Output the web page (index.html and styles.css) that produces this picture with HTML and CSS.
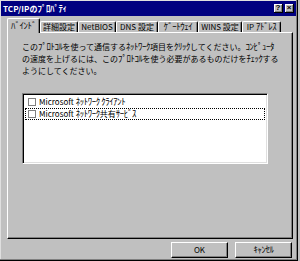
FILE: index.html
```html
<!DOCTYPE html>
<html lang="ja">
<head>
<meta charset="utf-8">
<title>TCP/IPのﾌﾟﾛﾊﾟﾃｨ</title>
<link rel="stylesheet" href="styles.css">
</head>
<body>
<div class="window">
  <div class="titlebar">
    <span class="title">TCP/IPの<span class="k">ﾌﾟﾛﾊﾟﾃｨ</span></span>
    <div class="tbtns">
      <span class="tbtn">?</span>
      <span class="tbtn close">×</span>
    </div>
  </div>
  <div class="client">
    <div class="tabs">
      <span class="tab active"><span class="k">ﾊﾞｲﾝﾄﾞ</span></span>
      <span class="tab">詳細設定</span>
      <span class="tab">NetBIOS</span>
      <span class="tab">DNS 設定</span>
      <span class="tab"><span class="k">ｹﾞｰﾄｳｪｲ</span></span>
      <span class="tab">WINS 設定</span>
      <span class="tab">IP <span class="k">ｱﾄﾞﾚｽ</span></span>
    </div>
    <div class="panel">
      <div class="desc">
        <span class="line">この<span class="k">ﾌﾟﾛﾄｺﾙ</span>を使って通信する<span class="k">ﾈｯﾄﾜｰｸ</span>項目を<span class="k">ｸﾘｯｸ</span>してください。<span class="k">ｺﾝﾋﾟｭｰﾀ</span></span>
        <span class="line">の速度を上げるには、この<span class="k">ﾌﾟﾛﾄｺﾙ</span>を使う必要があるものだけを<span class="k">ﾁｪｯｸ</span>する</span>
        <span class="line">ようにしてください。</span>
      </div>
      <div class="list">
        <div class="item"><span class="check"></span><span>Microsoft <span class="k">ﾈｯﾄﾜｰｸ ｸﾗｲｱﾝﾄ</span></span></div>
        <div class="item focus"><span class="check"></span><span>Microsoft <span class="k">ﾈｯﾄﾜｰｸ</span>共有<span class="k">ｻｰﾋﾞｽ</span></span></div>
      </div>
    </div>
    <div class="buttons">
      <span class="btn">OK</span>
      <span class="btn"><span class="k">ｷｬﾝｾﾙ</span></span>
    </div>
  </div>
</div>
</body>
</html>
```

FILE: styles.css
```css
html, body {
  margin: 0;
  padding: 0;
  background: #c0c0c0;
}

body {
  font-family: "Noto Sans CJK JP", "Liberation Sans", sans-serif;
  font-size: 8px;
  color: #000;
}

.k {
  font-size: 8.8px;
  letter-spacing: -0.4px;
}

.window {
  width: 298px;
  height: 261px;
  box-sizing: border-box;
  background: #c0c0c0;
  padding: 1px;
  border-right: 1px solid #000;
  border-bottom: 1px solid #000;
  box-shadow: inset -1px -1px #808080, inset 1px 1px #dfdfdf;
  display: flex;
  flex-direction: column;
}

.titlebar {
  height: 15px;
  background: #000080;
  color: #fff;
  display: flex;
  align-items: center;
  justify-content: space-between;
  padding: 0 2px;
}

.title {
  font-weight: bold;
  font-size: 8px;
  line-height: 15px;
  letter-spacing: 0.1px;
}

.tbtns {
  display: flex;
  gap: 2px;
}

.tbtn {
  width: 8px;
  height: 8px;
  background: #c0c0c0;
  color: #000;
  border-right: 1px solid #000;
  border-bottom: 1px solid #000;
  box-shadow: inset 1px 1px #fff, inset -1px -1px #808080;
  font-family: "Liberation Sans", sans-serif;
  font-weight: bold;
  font-size: 8px;
  line-height: 8px;
  text-align: center;
}

.client {
  flex: 1;
  display: flex;
  flex-direction: column;
  padding: 2px 3px 0 6px;
}

.tabs {
  height: 14px;
  display: flex;
  align-items: flex-end;
  padding-left: 2px;
  position: relative;
  z-index: 1;
}

.tab {
  flex: none;
  height: 11px;
  box-sizing: border-box;
  line-height: 10px;
  text-align: center;
  border-top: 1px solid #fff;
  border-left: 1px solid #fff;
  border-right: 1px solid #000;
  border-radius: 2px 2px 0 0;
  box-shadow: inset -1px 0 #808080;
  white-space: nowrap;
  background: #c0c0c0;
}

.tab:nth-child(1) { width: 33px; }
.tab:nth-child(2) { width: 38px; }
.tab:nth-child(3) { width: 38px; }
.tab:nth-child(4) { width: 42px; }
.tab:nth-child(5) { width: 40px; }
.tab:nth-child(6) { width: 44px; }
.tab:nth-child(7) { width: 39px; }

.tab.active {
  height: 15px;
  margin: 0 0 -1px -2px;
  line-height: 13px;
  position: relative;
}

.panel {
  height: 207px;
  box-sizing: border-box;
  border-top: 1px solid #fff;
  border-left: 1px solid #fff;
  border-right: 1px solid #000;
  border-bottom: 1px solid #000;
  box-shadow: inset -1px -1px #808080;
  padding: 8px 0 0 14px;
  display: flex;
  flex-direction: column;
}

.desc {
  display: flex;
  flex-direction: column;
  line-height: 12px;
  white-space: nowrap;
}

.line {
  height: 12px;
}

.list {
  margin-top: 16px;
  width: 246px;
  height: 71px;
  box-sizing: border-box;
  background: #fff;
  border-top: 1px solid #808080;
  border-left: 1px solid #808080;
  border-right: 1px solid #fff;
  border-bottom: 1px solid #fff;
  box-shadow: inset 1px 1px #000, inset -1px -1px #dfdfdf;
  padding: 2px 2px 0 2px;
}

.item {
  height: 12px;
  box-sizing: border-box;
  display: flex;
  align-items: center;
  gap: 3px;
  padding-left: 2px;
  white-space: nowrap;
  border: 1px solid transparent;
  line-height: 10px;
}

.item.focus {
  border: 1px dotted #000;
}

.check {
  flex: none;
  width: 8px;
  height: 8px;
  box-sizing: border-box;
  border: 1px solid #808080;
  background: #fff;
}

.buttons {
  display: flex;
  justify-content: flex-end;
  gap: 7px;
  padding: 3px 1px 0 0;
}

.btn {
  width: 57px;
  height: 16px;
  box-sizing: border-box;
  background: #c0c0c0;
  border-top: 1px solid #fff;
  border-left: 1px solid #fff;
  border-right: 1px solid #000;
  border-bottom: 1px solid #000;
  box-shadow: inset -1px -1px #808080;
  text-align: center;
  line-height: 14px;
}
```
